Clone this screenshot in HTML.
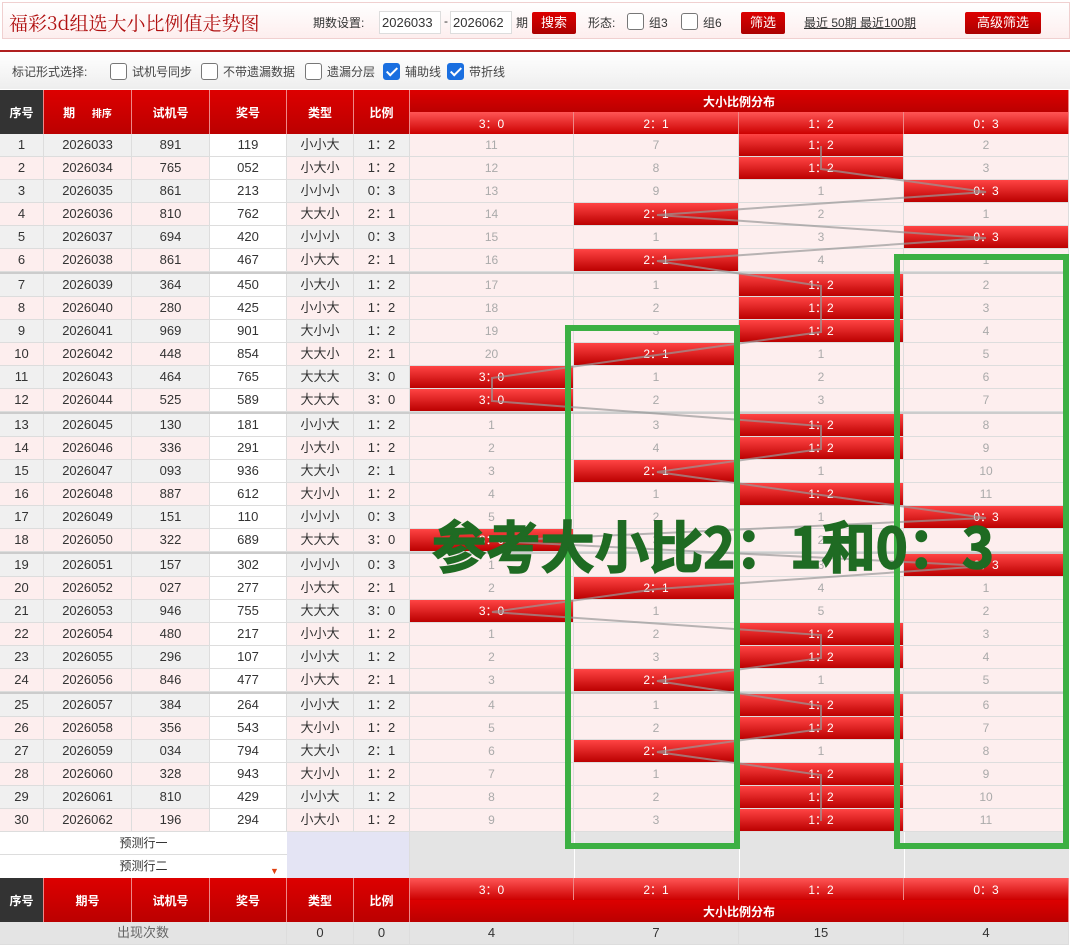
<!DOCTYPE html><html><head><meta charset="utf-8"><style>
*{box-sizing:border-box;margin:0;padding:0}
body{width:1080px;height:938px;overflow:hidden;background:#fff;font-family:"Liberation Sans","Noto Sans CJK SC",sans-serif;font-size:13px;color:#333;position:relative}
.top{position:absolute;left:2px;top:2px;width:1068px;height:37px;background:linear-gradient(#fff,#fdeeee);border:1px solid #f0d0d0}
.title{position:absolute;left:6px;top:6px;font-size:19px;color:#b01010;font-family:"Noto Serif CJK SC",serif}
.t{position:absolute;top:11px;font-size:12px;color:#333}
.inp{position:absolute;top:8px;height:23px;width:62px;background:#fff;border:1px solid #ddd;font-size:13px;padding:3px 2px}
.btn{position:absolute;top:9px;height:22px;background:linear-gradient(#d00,#a00);color:#fff;font-size:13px;text-align:center;line-height:22px;border-radius:2px}
.cb{position:absolute;width:17px;height:17px;border:1px solid #777;border-radius:3px;background:#fff}
.cb.on{background:#1a6fe0;border-color:#1a6fe0}
.cb.on:after{content:"";position:absolute;left:5px;top:1px;width:4px;height:9px;border:solid #fff;border-width:0 2px 2px 0;transform:rotate(45deg)}
.redline{position:absolute;left:0;top:50px;width:1070px;height:2px;background:#b02020}
.opt{position:absolute;left:0;top:52px;width:1070px;height:37px;background:linear-gradient(#fff,#eee)}
.o{position:absolute;top:63px;font-size:12px;color:#444}
.hd{position:absolute;color:#fff;font-weight:bold;text-align:center;display:flex;align-items:center;justify-content:center;border-right:1px solid #e88;font-size:12px;background:linear-gradient(#d00,#b00)}
.hs{background:linear-gradient(#f55,#c00);font-weight:normal;font-size:12px}
.row{position:absolute;left:0;width:1069px;height:23px;display:grid;grid-template-columns:44px 88px 78px 77px 67px 56px 164px 165px 165px 165px}
.row div{border-right:1px solid #ddd;border-bottom:1px solid #ddd;text-align:center;line-height:22px;font-size:13px}
.row div.w{background:#fff}
.row div.d{background:#fdeeee;color:#aaa;font-size:12px}
.row div.h{background:linear-gradient(#f44,#b00);color:#fff;font-size:12px}
.g div{background:#f0f0f0}.p div{background:#fdeeee}
.sep{position:absolute;left:0;width:1069px;height:2px;background:#ccc}
</style></head><body>
<div class="top">
<div class="title">福彩3d组选大小比例值走势图</div>
<div class="t" style="left:310px">期数设置:</div>
<div class="inp" style="left:376px">2026033</div><div class="t" style="left:441px">-</div>
<div class="inp" style="left:447px">2026062</div><div class="t" style="left:513px">期</div>
<div class="btn" style="left:529px;width:44px">搜索</div>
<div class="t" style="left:585px">形态:</div>
<div class="cb" style="left:624px;top:10px"></div><div class="t" style="left:646px">组3</div>
<div class="cb" style="left:678px;top:10px"></div><div class="t" style="left:700px">组6</div>
<div class="btn" style="left:738px;width:44px">筛选</div>
<div class="t" style="left:801px;text-decoration:underline">最近 50期 最近100期</div>
<div class="btn" style="left:962px;width:76px">高级筛选</div>
</div>
<div class="redline"></div><div class="opt"></div>
<div class="o" style="left:12px">标记形式选择:</div>
<div class="cb" style="left:110px;top:63px"></div><div class="o" style="left:132px">试机号同步</div>
<div class="cb" style="left:201px;top:63px"></div><div class="o" style="left:223px">不带遗漏数据</div>
<div class="cb" style="left:305px;top:63px"></div><div class="o" style="left:327px">遗漏分层</div>
<div class="cb on" style="left:383px;top:63px"></div><div class="o" style="left:405px">辅助线</div>
<div class="cb on" style="left:447px;top:63px"></div><div class="o" style="left:469px">带折线</div>

<div class="hd" style="left:0;top:90px;width:44px;height:44px;background:#333">序号</div>
<div class="hd" style="left:44px;top:90px;width:88px;height:44px">期&nbsp;&nbsp;&nbsp;&nbsp;&nbsp;<span style="font-size:10px">排序</span></div>
<div class="hd" style="left:132px;top:90px;width:78px;height:44px">试机号</div>
<div class="hd" style="left:210px;top:90px;width:77px;height:44px">奖号</div>
<div class="hd" style="left:287px;top:90px;width:67px;height:44px">类型</div>
<div class="hd" style="left:354px;top:90px;width:56px;height:44px">比例</div>
<div class="hd" style="left:410px;top:90px;width:659px;height:22px">大小比例分布</div>
<div class="hd hs" style="left:410px;top:112px;width:164px;height:22px">3：0</div>
<div class="hd hs" style="left:574px;top:112px;width:165px;height:22px">2：1</div>
<div class="hd hs" style="left:739px;top:112px;width:165px;height:22px">1：2</div>
<div class="hd hs" style="left:904px;top:112px;width:165px;height:22px">0：3</div>

<div class="row g" style="top:134px"><div>1</div><div>2026033</div><div>891</div><div class="w">119</div><div>小小大</div><div>1：2</div><div class="d">11</div><div class="d">7</div><div class="h">1：2</div><div class="d">2</div></div>
<div class="row p" style="top:157px"><div>2</div><div>2026034</div><div>765</div><div class="w">052</div><div>小大小</div><div>1：2</div><div class="d">12</div><div class="d">8</div><div class="h">1：2</div><div class="d">3</div></div>
<div class="row g" style="top:180px"><div>3</div><div>2026035</div><div>861</div><div class="w">213</div><div>小小小</div><div>0：3</div><div class="d">13</div><div class="d">9</div><div class="d">1</div><div class="h">0：3</div></div>
<div class="row p" style="top:203px"><div>4</div><div>2026036</div><div>810</div><div class="w">762</div><div>大大小</div><div>2：1</div><div class="d">14</div><div class="h">2：1</div><div class="d">2</div><div class="d">1</div></div>
<div class="row g" style="top:226px"><div>5</div><div>2026037</div><div>694</div><div class="w">420</div><div>小小小</div><div>0：3</div><div class="d">15</div><div class="d">1</div><div class="d">3</div><div class="h">0：3</div></div>
<div class="row p" style="top:249px"><div>6</div><div>2026038</div><div>861</div><div class="w">467</div><div>小大大</div><div>2：1</div><div class="d">16</div><div class="h">2：1</div><div class="d">4</div><div class="d">1</div></div>
<div class="sep" style="top:272px"></div>
<div class="row g" style="top:274px"><div>7</div><div>2026039</div><div>364</div><div class="w">450</div><div>小大小</div><div>1：2</div><div class="d">17</div><div class="d">1</div><div class="h">1：2</div><div class="d">2</div></div>
<div class="row p" style="top:297px"><div>8</div><div>2026040</div><div>280</div><div class="w">425</div><div>小小大</div><div>1：2</div><div class="d">18</div><div class="d">2</div><div class="h">1：2</div><div class="d">3</div></div>
<div class="row g" style="top:320px"><div>9</div><div>2026041</div><div>969</div><div class="w">901</div><div>大小小</div><div>1：2</div><div class="d">19</div><div class="d">3</div><div class="h">1：2</div><div class="d">4</div></div>
<div class="row p" style="top:343px"><div>10</div><div>2026042</div><div>448</div><div class="w">854</div><div>大大小</div><div>2：1</div><div class="d">20</div><div class="h">2：1</div><div class="d">1</div><div class="d">5</div></div>
<div class="row g" style="top:366px"><div>11</div><div>2026043</div><div>464</div><div class="w">765</div><div>大大大</div><div>3：0</div><div class="h">3：0</div><div class="d">1</div><div class="d">2</div><div class="d">6</div></div>
<div class="row p" style="top:389px"><div>12</div><div>2026044</div><div>525</div><div class="w">589</div><div>大大大</div><div>3：0</div><div class="h">3：0</div><div class="d">2</div><div class="d">3</div><div class="d">7</div></div>
<div class="sep" style="top:412px"></div>
<div class="row g" style="top:414px"><div>13</div><div>2026045</div><div>130</div><div class="w">181</div><div>小小大</div><div>1：2</div><div class="d">1</div><div class="d">3</div><div class="h">1：2</div><div class="d">8</div></div>
<div class="row p" style="top:437px"><div>14</div><div>2026046</div><div>336</div><div class="w">291</div><div>小大小</div><div>1：2</div><div class="d">2</div><div class="d">4</div><div class="h">1：2</div><div class="d">9</div></div>
<div class="row g" style="top:460px"><div>15</div><div>2026047</div><div>093</div><div class="w">936</div><div>大大小</div><div>2：1</div><div class="d">3</div><div class="h">2：1</div><div class="d">1</div><div class="d">10</div></div>
<div class="row p" style="top:483px"><div>16</div><div>2026048</div><div>887</div><div class="w">612</div><div>大小小</div><div>1：2</div><div class="d">4</div><div class="d">1</div><div class="h">1：2</div><div class="d">11</div></div>
<div class="row g" style="top:506px"><div>17</div><div>2026049</div><div>151</div><div class="w">110</div><div>小小小</div><div>0：3</div><div class="d">5</div><div class="d">2</div><div class="d">1</div><div class="h">0：3</div></div>
<div class="row p" style="top:529px"><div>18</div><div>2026050</div><div>322</div><div class="w">689</div><div>大大大</div><div>3：0</div><div class="h">3：0</div><div class="d">3</div><div class="d">2</div><div class="d">1</div></div>
<div class="sep" style="top:552px"></div>
<div class="row g" style="top:554px"><div>19</div><div>2026051</div><div>157</div><div class="w">302</div><div>小小小</div><div>0：3</div><div class="d">1</div><div class="d">4</div><div class="d">3</div><div class="h">0：3</div></div>
<div class="row p" style="top:577px"><div>20</div><div>2026052</div><div>027</div><div class="w">277</div><div>小大大</div><div>2：1</div><div class="d">2</div><div class="h">2：1</div><div class="d">4</div><div class="d">1</div></div>
<div class="row g" style="top:600px"><div>21</div><div>2026053</div><div>946</div><div class="w">755</div><div>大大大</div><div>3：0</div><div class="h">3：0</div><div class="d">1</div><div class="d">5</div><div class="d">2</div></div>
<div class="row p" style="top:623px"><div>22</div><div>2026054</div><div>480</div><div class="w">217</div><div>小小大</div><div>1：2</div><div class="d">1</div><div class="d">2</div><div class="h">1：2</div><div class="d">3</div></div>
<div class="row g" style="top:646px"><div>23</div><div>2026055</div><div>296</div><div class="w">107</div><div>小小大</div><div>1：2</div><div class="d">2</div><div class="d">3</div><div class="h">1：2</div><div class="d">4</div></div>
<div class="row p" style="top:669px"><div>24</div><div>2026056</div><div>846</div><div class="w">477</div><div>小大大</div><div>2：1</div><div class="d">3</div><div class="h">2：1</div><div class="d">1</div><div class="d">5</div></div>
<div class="sep" style="top:692px"></div>
<div class="row g" style="top:694px"><div>25</div><div>2026057</div><div>384</div><div class="w">264</div><div>小小大</div><div>1：2</div><div class="d">4</div><div class="d">1</div><div class="h">1：2</div><div class="d">6</div></div>
<div class="row p" style="top:717px"><div>26</div><div>2026058</div><div>356</div><div class="w">543</div><div>大小小</div><div>1：2</div><div class="d">5</div><div class="d">2</div><div class="h">1：2</div><div class="d">7</div></div>
<div class="row g" style="top:740px"><div>27</div><div>2026059</div><div>034</div><div class="w">794</div><div>大大小</div><div>2：1</div><div class="d">6</div><div class="h">2：1</div><div class="d">1</div><div class="d">8</div></div>
<div class="row p" style="top:763px"><div>28</div><div>2026060</div><div>328</div><div class="w">943</div><div>大小小</div><div>1：2</div><div class="d">7</div><div class="d">1</div><div class="h">1：2</div><div class="d">9</div></div>
<div class="row g" style="top:786px"><div>29</div><div>2026061</div><div>810</div><div class="w">429</div><div>小小大</div><div>1：2</div><div class="d">8</div><div class="d">2</div><div class="h">1：2</div><div class="d">10</div></div>
<div class="row p" style="top:809px"><div>30</div><div>2026062</div><div>196</div><div class="w">294</div><div>小大小</div><div>1：2</div><div class="d">9</div><div class="d">3</div><div class="h">1：2</div><div class="d">11</div></div>

<div style="position:absolute;left:0;top:832px;width:287px;height:23px;background:#fff;border-bottom:1px solid #ddd;text-align:center;line-height:22px;font-size:12px">预测行一</div>
<div style="position:absolute;left:0;top:855px;width:287px;height:23px;background:#fff;text-align:center;line-height:22px;font-size:12px">预测行二</div>
<div style="position:absolute;left:270px;top:866px;color:#e04010;font-size:9px">▼</div>
<div style="position:absolute;left:287px;top:832px;width:123px;height:46px;background:#e4e4f4;border-right:1px solid #ddd"></div>
<div style="position:absolute;left:410px;top:832px;width:659px;height:46px;background:#e4e4e4;background-image:linear-gradient(90deg,transparent 164px,#fff 164px,#fff 165px,transparent 165px,transparent 329px,#fff 329px,#fff 330px,transparent 330px,transparent 494px,#fff 494px,#fff 495px,transparent 495px)"></div>

<div class="hd" style="left:0;top:878px;width:44px;height:44px;background:#333">序号</div>
<div class="hd" style="left:44px;top:878px;width:88px;height:44px">期号</div>
<div class="hd" style="left:132px;top:878px;width:78px;height:44px">试机号</div>
<div class="hd" style="left:210px;top:878px;width:77px;height:44px">奖号</div>
<div class="hd" style="left:287px;top:878px;width:67px;height:44px">类型</div>
<div class="hd" style="left:354px;top:878px;width:56px;height:44px">比例</div>
<div class="hd hs" style="left:410px;top:878px;width:164px;height:22px">3：0</div>
<div class="hd hs" style="left:574px;top:878px;width:165px;height:22px">2：1</div>
<div class="hd hs" style="left:739px;top:878px;width:165px;height:22px">1：2</div>
<div class="hd hs" style="left:904px;top:878px;width:165px;height:22px">0：3</div>
<div class="hd" style="left:410px;top:900px;width:659px;height:22px">大小比例分布</div>
<div class="row" style="top:922px"><div style="grid-column:span 4;background:#e4e4e4;color:#666">出现次数</div><div style="background:#e4e4e4">0</div><div style="background:#e4e4e4">0</div><div style="background:#e4e4e4">4</div><div style="background:#e4e4e4">7</div><div style="background:#e4e4e4">15</div><div style="background:#e4e4e4">4</div></div>

<svg style="position:absolute;left:0;top:0" width="1080" height="938"><polyline fill="none" stroke="#999" stroke-width="2" opacity=".7" points="821,146 821,169 986,192 657,215 986,238 657,261 821,286 821,309 821,332 657,355 492,378 492,401 821,426 821,449 657,472 821,495 986,518 492,541 986,566 657,589 492,612 821,635 821,658 657,681 821,706 821,729 657,752 821,775 821,798 821,821"/>
<rect x="568" y="328" width="169" height="518" fill="none" stroke="#3cb043" stroke-width="6"/>
<rect x="897" y="257" width="169" height="589" fill="none" stroke="#3cb043" stroke-width="6"/>
<text x="432" y="568" font-family="Noto Sans CJK SC,sans-serif" font-weight="bold" font-size="56" fill="#1f6b23" stroke="#1f6b23" stroke-width="1.5" textLength="562" lengthAdjust="spacingAndGlyphs">参考大小比2：1和0：3</text></svg>
</body></html>
